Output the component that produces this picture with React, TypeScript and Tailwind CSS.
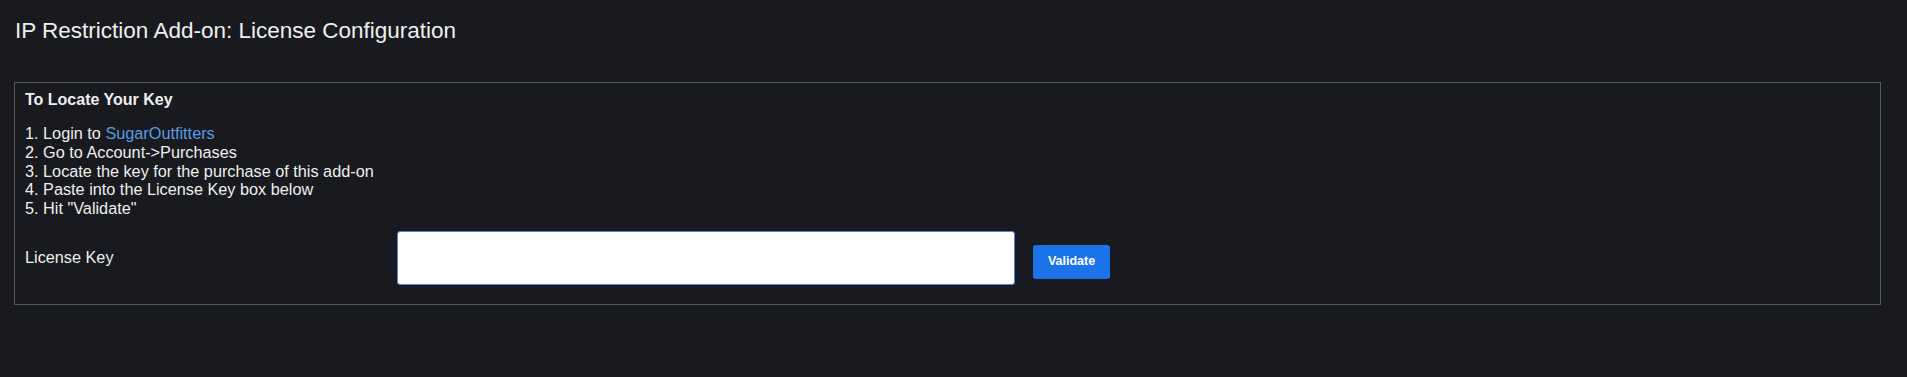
export default function App() {
  const steps = [
    "Go to Account->Purchases",
    "Locate the key for the purchase of this add-on",
    "Paste into the License Key box below",
    'Hit "Validate"',
  ];

  return (
    <div
      className="min-h-screen bg-[#181a1f] text-[#eeeeee] pt-[18px] pb-8"
      style={{ fontFamily: '"Liberation Sans", Arial, sans-serif' }}
    >
      <h1 className="ml-[15px] text-[22.5px] leading-[1.15] font-normal">
        IP Restriction Add-on: License Configuration
      </h1>

      <div className="mt-[38px] ml-[14px] mr-[26px] border border-[#55585d] px-[10px] pt-[8px] pb-[19px]">
        <h2 className="text-[16px] leading-[1.15] font-bold">To Locate Your Key</h2>

        <div className="mt-[15px] text-[16.25px] leading-[1.15]">
          <div>
            1. Login to{" "}
            <a href="#" className="text-[#5b9ae0]">
              SugarOutfitters
            </a>
          </div>
          {steps.map((s, i) => (
            <div key={i}>
              {i + 2}. {s}
            </div>
          ))}
        </div>

        <div className="mt-[13px] flex items-center">
          <label className="w-[372px] text-[16.25px] leading-[1.15]">License Key</label>
          <input
            type="text"
            className="w-[618px] h-[54px] bg-white border border-[#4a88d8] rounded-[3px] px-2 text-black outline-none"
          />
          <button className="ml-[18px] mt-[8px] w-[77px] h-[34px] bg-[#1a73e8] rounded-[3px] text-white font-bold text-[12.5px]">
            Validate
          </button>
        </div>
      </div>
    </div>
  );
}
